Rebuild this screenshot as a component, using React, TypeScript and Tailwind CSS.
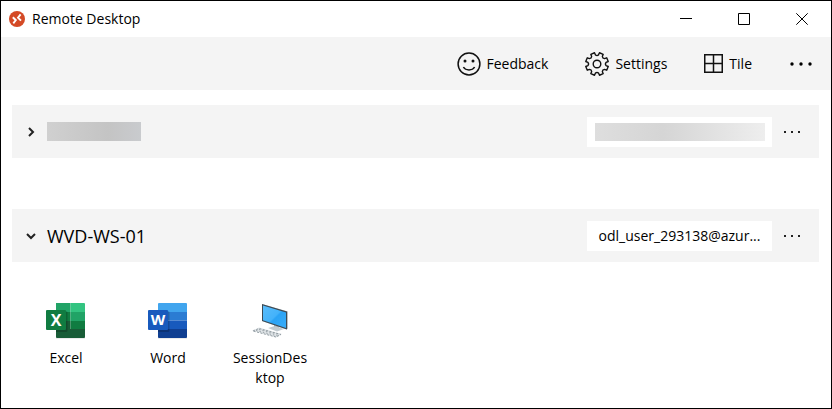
import type { ReactNode } from "react";

function RemoteDesktopLogo() {
  return (
    <svg width="16" height="16" viewBox="0 0 16 16" aria-hidden="true">
      <circle cx="8" cy="8" r="8" fill="#d44a26" />
      <path d="M3.800 6.300 6.800 9.200 4.300 12.300M11.600 3.400 9 6.700l3 2.900" fill="none" stroke="#fff" strokeWidth="1.9" />
    </svg>
  );
}

function SmileIcon() {
  return (
    <svg width="24" height="24" viewBox="0 0 24 24" fill="none" stroke="#111" strokeWidth="1.5" aria-hidden="true">
      <circle cx="12" cy="12" r="10.900" />
      <path d="M6.400 15c2.200 3.900 9 3.900 11.200 0" />
      <circle cx="8" cy="9" r="1.500" fill="#111" stroke="none" />
      <circle cx="16" cy="9" r="1.500" fill="#111" stroke="none" />
    </svg>
  );
}

const gearPath = (() => {
  const at = (radius: number, degrees: number) => {
    const angle = (degrees * Math.PI) / 180;
    return `${(12 + radius * Math.sin(angle)).toFixed(2)} ${(12 - radius * Math.cos(angle)).toFixed(2)}`;
  };
  let path = `M${at(9.2, 9)}`;
  for (let tooth = 0; tooth < 8; tooth++) {
    const center = tooth * 45 + 22.5;
    path += `L${at(11.5, center - 10)}L${at(11.5, center + 10)}L${at(9.2, center + 13)}Q${at(7.8, center + 22.5)} ${at(9.2, center + 32)}`;
  }
  return `${path}Z`;
})();

function GearIcon() {
  return (
    <svg width="24" height="24" viewBox="0 0 24 24" fill="none" stroke="#111" strokeWidth="1.4" strokeLinejoin="round" aria-hidden="true">
      <path d={gearPath} />
      <circle cx="12" cy="12" r="3.800" />
    </svg>
  );
}

function TileIcon() {
  return (
    <svg width="19" height="19" viewBox="0 0 19 19" fill="none" stroke="#111" strokeWidth="1.5" aria-hidden="true">
      <path d="M.75.75h17.5v17.5H.75zM9.5 1v17M1 9.5h17" />
    </svg>
  );
}

function BigDots() {
  return (
    <svg width="24" height="4" viewBox="0 0 24 4" fill="#000" aria-hidden="true">
      <circle cx="3" cy="2" r="1.700" />
      <circle cx="12" cy="2" r="1.700" />
      <circle cx="21" cy="2" r="1.700" />
    </svg>
  );
}

function SmallDots() {
  return (
    <svg width="18" height="2" viewBox="0 0 18 2" fill="#222" aria-hidden="true">
      <path d="M1 0h2v2H1zM8 0h2v2H8zM15 0h2v2h-2z" />
    </svg>
  );
}

function Chevron({ open }: { open: boolean }) {
  return (
    <svg width="12" height="12" viewBox="0 0 12 12" fill="none" stroke="#222" strokeWidth="2" aria-hidden="true">
      <path d={open ? "M2 4l4 4 4-4" : "M4 2l4 4-4 4"} />
    </svg>
  );
}

function ExcelIcon() {
  return (
    <svg width="40" height="36" viewBox="0 0 40 36" aria-hidden="true">
      <path d="M10 34h29v1.6H10z" fill="#ddd" />
      <path d="M10 0h14.500v9H10z" fill="#21a366" />
      <path d="M24.500 0H38q1 0 1 1v8H24.500z" fill="#33c481" />
      <path d="M10 9h14.500v9H10z" fill="#107c41" />
      <path d="M24.500 9H39v9H24.500z" fill="#21a366" />
      <path d="M10 18h14.500v8H10z" fill="#185c37" />
      <path d="M24.500 18H39v8H24.500z" fill="#107c41" />
      <path d="M10 26h29v8q0 1-1 1H11q-1 0-1-1z" fill="#185c37" />
      <path d="M10 8h10q1.500 0 1.500 1.500v18q0 1.500-1.500 1.500H10z" fill="#000" opacity=".2" />
      <rect y="7" width="20" height="20" rx="1" fill="#107c41" />
      <text x="10" y="23" textAnchor="middle" fill="#fff" fontFamily="Open Sans" fontWeight="700" fontSize="16">X</text>
    </svg>
  );
}

function WordIcon() {
  return (
    <svg width="40" height="36" viewBox="0 0 40 36" aria-hidden="true">
      <path d="M10 34h29v1.6H10z" fill="#ddd" />
      <path d="M10 9V1q0-1 1-1h27q1 0 1 1v8z" fill="#41a5ee" />
      <path d="M10 9h29v8.500H10z" fill="#2b7cd3" />
      <path d="M10 17.500h29V26H10z" fill="#185abd" />
      <path d="M10 26h29v8q0 1-1 1H11q-1 0-1-1z" fill="#103f91" />
      <path d="M10 8h10q1.500 0 1.500 1.500v18q0 1.500-1.500 1.500H10z" fill="#000" opacity=".2" />
      <rect y="7" width="20" height="20" rx="1" fill="#185abd" />
      <text x="10" y="22" textAnchor="middle" fill="#fff" fontFamily="Open Sans" fontWeight="700" fontSize="15">W</text>
    </svg>
  );
}

function DesktopIcon() {
  return (
    <svg width="40" height="36" viewBox="0 0 40 36" aria-hidden="true">
      <defs>
        <linearGradient id="screen" x1="0" y1="0" x2="1" y2="1">
          <stop offset="0" stopColor="#59bdfc" />
          <stop offset=".5" stopColor="#43b2fa" />
          <stop offset=".55" stopColor="#2aa3f5" />
          <stop offset="1" stopColor="#38adf9" />
        </linearGradient>
      </defs>
      <path d="M24 21l5 2v4h-5z" fill="#9ba5ab" />
      <path d="M18 25l7-2 9 3-7 2.500z" fill="#c3ccd1" />
      <path d="M12 1 38 8.500v17l-1.500 1L12 18z" fill="#b9c1c6" />
      <path d="M12 1 37 8.500v18L12 18z" fill="#3c4a54" />
      <path d="M13 2.500 36 9.500v15.500L13 17.200z" fill="url(#screen)" />
      <path d="M2 27.500 9 24.500l23 6.500-6 3.500z" fill="#dfe4e7" />
      <path d="M3 28 9 25.500l22 6-5 2.500z" fill="none" stroke="#939da3" strokeWidth="1" strokeDasharray="2 1.500" />
      <path d="M6 27.500l22 5.500M9 26.500l20 5" stroke="#9aa3a8" strokeWidth="1" strokeDasharray="1.500 2" />
    </svg>
  );
}

function WindowButton({ label, children }: { label: string; children: ReactNode }) {
  return (
    <button type="button" aria-label={label} className="flex w-[58px] items-center justify-center self-stretch">
      <svg width="12" height="12" viewBox="0 0 12 12" fill="none" stroke="#000" aria-hidden="true">
        {children}
      </svg>
    </button>
  );
}

function ToolbarButton({ icon, children }: { icon: ReactNode; children: ReactNode }) {
  return (
    <button type="button" className="flex items-center gap-[6px]">
      {icon}
      <span>{children}</span>
    </button>
  );
}

function Workspace({ open, title, account }: { open: boolean; title: ReactNode; account: ReactNode }) {
  return (
    <header className="flex h-[53px] items-center bg-[#f4f4f4] px-[13px]">
      <button type="button" aria-expanded={open} aria-label={open ? undefined : "Expand workspace"} className="flex items-center gap-[10px]">
        <Chevron open={open} />
        {title}
      </button>
      <div className="ml-auto flex h-[30px] w-[185px] items-center justify-center bg-white">{account}</div>
      <button type="button" aria-label="Workspace options" className="ml-[6px] flex h-8 w-7 items-center justify-center">
        <SmallDots />
      </button>
    </header>
  );
}

function AppTile({ icon, name }: { icon: ReactNode; name: string }) {
  return (
    <li>
      <button type="button" className="flex w-[76px] flex-col items-center gap-[9px]">
        {icon}
        <span className="w-full leading-5 break-all">{name}</span>
      </button>
    </li>
  );
}

export default function App() {
  return (
    <div className="min-h-screen border border-black bg-white font-['Open_Sans',sans-serif] text-[14px] leading-5 text-black">
      <div className="flex h-9 items-center pl-2">
        <RemoteDesktopLogo />
        <h1 className="ml-[7px]">Remote Desktop</h1>
        <div className="ml-auto flex self-stretch">
          <WindowButton label="Minimize">
            <path d="M0 5.500h12" />
          </WindowButton>
          <WindowButton label="Maximize">
            <path d="M.5.5h11v11H.5z" />
          </WindowButton>
          <WindowButton label="Close">
            <path d="M.3.3l11.400 11.400M11.700.3.3 11.700" />
          </WindowButton>
        </div>
      </div>
      <nav aria-label="Commands" className="flex h-[53px] items-center justify-end gap-[37px] bg-[#f4f4f4] pr-[18px]">
        <ToolbarButton icon={<SmileIcon />}>Feedback</ToolbarButton>
        <ToolbarButton icon={<GearIcon />}>Settings</ToolbarButton>
        <ToolbarButton icon={<TileIcon />}>Tile</ToolbarButton>
        <button type="button" aria-label="More">
          <BigDots />
        </button>
      </nav>
      <main className="flex flex-col gap-[51px] pt-[15px] pr-3 pl-[11px]">
        <section>
          <Workspace
            open={false}
            title={<span className="h-[19px] w-[94px] bg-linear-to-r from-[#d0d0d0] via-[#c4c4c4] via-65% to-[#c9cbce]" />}
            account={<span className="h-[18px] w-[170px] bg-linear-to-r from-[#dedede] via-[#d5d5d5] via-40% to-[#eeeeee]" />}
          />
        </section>
        <section>
          <Workspace open title={<span className="text-[18px]">WVD-WS-01</span>} account={<span>odl_user_293138@azur...</span>} />
          <ul className="flex gap-[26px] px-4 pt-[41px] pb-5">
            <AppTile icon={<ExcelIcon />} name="Excel" />
            <AppTile icon={<WordIcon />} name="Word" />
            <AppTile icon={<DesktopIcon />} name="SessionDesktop" />
          </ul>
        </section>
      </main>
    </div>
  );
}
